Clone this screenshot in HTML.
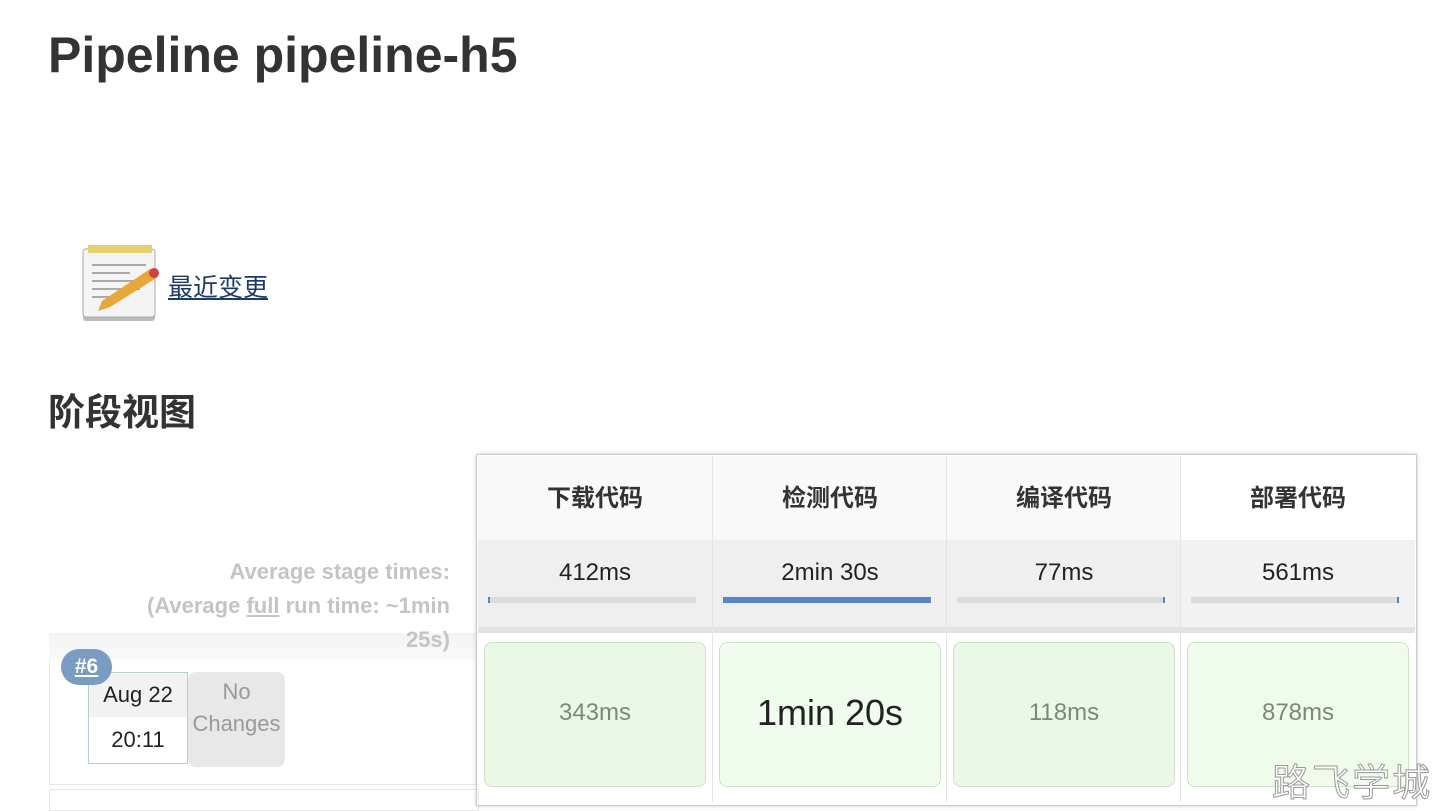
<!DOCTYPE html>
<html><head><meta charset="utf-8"><style>
body{margin:0;width:1444px;height:802px;overflow:hidden;background:#fff;font-family:"Liberation Sans","Noto Sans CJK SC",sans-serif;position:relative}
.a{position:absolute}
h1{position:absolute;left:48px;top:26px;margin:0;font-size:50px;font-weight:bold;color:#333}
h2{position:absolute;left:48px;top:382px;margin:0;font-size:37px;font-weight:bold;color:#333}
.col{position:absolute;top:456px;width:234px;height:346px}
.hd{height:84px;line-height:86px;text-align:center;font-size:24px;font-weight:bold;color:#333;background:#f9f9f9;border-bottom:1px solid #eee}
.avg{height:86px;background:#efefef;text-align:center;font-size:24px;color:#222;position:relative;border-bottom:6px solid #e2e2e2}
.avg span{position:absolute;top:18px;left:0;right:0}
.bar{position:absolute;left:10px;right:16px;top:56px;height:6px;background:#d8dcdf;border-left:2px solid #5a83b8}
.cell{position:absolute;left:6px;right:6px;top:186px;height:143px;background:#ebf8e8;border:1px solid #cde0c8;border-radius:8px;text-align:center;line-height:140px;font-size:24px;color:#7a8a7a}
</style></head><body>
<h1>Pipeline pipeline-h5</h1>
<svg class="a" style="left:80px;top:243px" width="80" height="80" viewBox="0 0 80 80">
<rect x="3" y="8" width="72" height="70" rx="3" fill="#bbb"/>
<rect x="3" y="6" width="72" height="68" rx="3" fill="#f4f4f4" stroke="#aaa"/>
<rect x="8" y="2" width="64" height="8" fill="#e8d070"/>
<g stroke="#aaa" stroke-width="2"><line x1="12" y1="22" x2="66" y2="22"/><line x1="12" y1="30" x2="50" y2="30"/><line x1="12" y1="38" x2="66" y2="38"/><line x1="12" y1="46" x2="60" y2="46"/><line x1="12" y1="54" x2="40" y2="54"/></g>
<polygon points="22,58 70,26 78,34 30,64 18,68" fill="#e6a83a"/><circle cx="74" cy="30" r="5" fill="#d04040"/>
</svg>
<a class="a" style="left:168px;top:268px;font-size:25px;color:#1e3a6a;text-decoration:underline">最近变更</a>
<h2>阶段视图</h2>
<div class="a" style="left:49px;top:633px;width:428px;height:150px;border:1px solid #e6e6e6;border-right:none"></div>
<div class="a" style="left:49px;top:633px;width:428px;height:28px;background:linear-gradient(#f3f3f3,#fafafa)"></div>
<div class="a" style="left:49px;top:789px;width:428px;height:20px;border:1px solid #e6e6e6"></div>
<div class="a" style="left:0px;top:555px;width:450px;text-align:right;font-size:22px;font-weight:bold;color:#c4c4c4;line-height:34px;white-space:nowrap">Average stage times:<br>(Average <u>full</u> run time: ~1min<br>25s)</div>
<div class="a" style="left:188px;top:672px;width:97px;height:91px;background:#e8e8e8;border-radius:8px;text-align:center;font-size:22px;color:#999;line-height:32px;padding-top:4px">No<br>Changes</div>
<div class="a" style="left:88px;top:672px;width:98px;height:90px;border:1px solid #b7d0c7;background:#fff;text-align:center;font-size:22px;color:#222">
<div style="height:44px;line-height:44px;background:#f2f2f2">Aug 22</div><div style="line-height:46px">20:11</div></div>
<div class="a" style="left:61px;top:649px;width:51px;height:36px;border-radius:18px;background:#7b9cc2;color:#fff;text-align:center;line-height:36px;font-size:21px;font-weight:bold;text-decoration:underline">#6</div>
<div class="a" style="left:476px;top:454px;width:939px;height:350px;border:1px solid #ccc;box-shadow:0 0 4px #ccc"></div>
<div class="col" style="left:478px"><div class="hd">下载代码</div><div class="avg"><span>412ms</span><div class="bar"></div></div><div class="cell">343ms</div></div>
<div class="col" style="left:712px;border-left:1px solid #e4e4e4"><div class="hd">检测代码</div><div class="avg"><span>2min 30s</span><div class="bar" style="background:#5a83c8"></div></div><div class="cell" style="background:#f0fcee;color:#222;font-size:36px">1min 20s</div></div>
<div class="col" style="left:946px;border-left:1px solid #e4e4e4"><div class="hd">编译代码</div><div class="avg"><span>77ms</span><div class="bar" style="border-left:none;border-right:2px solid #5a83b8"></div></div><div class="cell">118ms</div></div>
<div class="col" style="left:1180px;border-left:1px solid #e4e4e4"><div class="hd" style="background:#fff">部署代码</div><div class="avg" style="background:#f2f2f2"><span>561ms</span><div class="bar" style="border-left:none;border-right:2px solid #5a83b8"></div></div><div class="cell" style="background:#effcec">878ms</div></div>
<div class="a" style="left:1272px;top:752px;font-size:38px;color:#fff;-webkit-text-stroke:1px #999;letter-spacing:2px">路飞学城</div>
</body></html>
